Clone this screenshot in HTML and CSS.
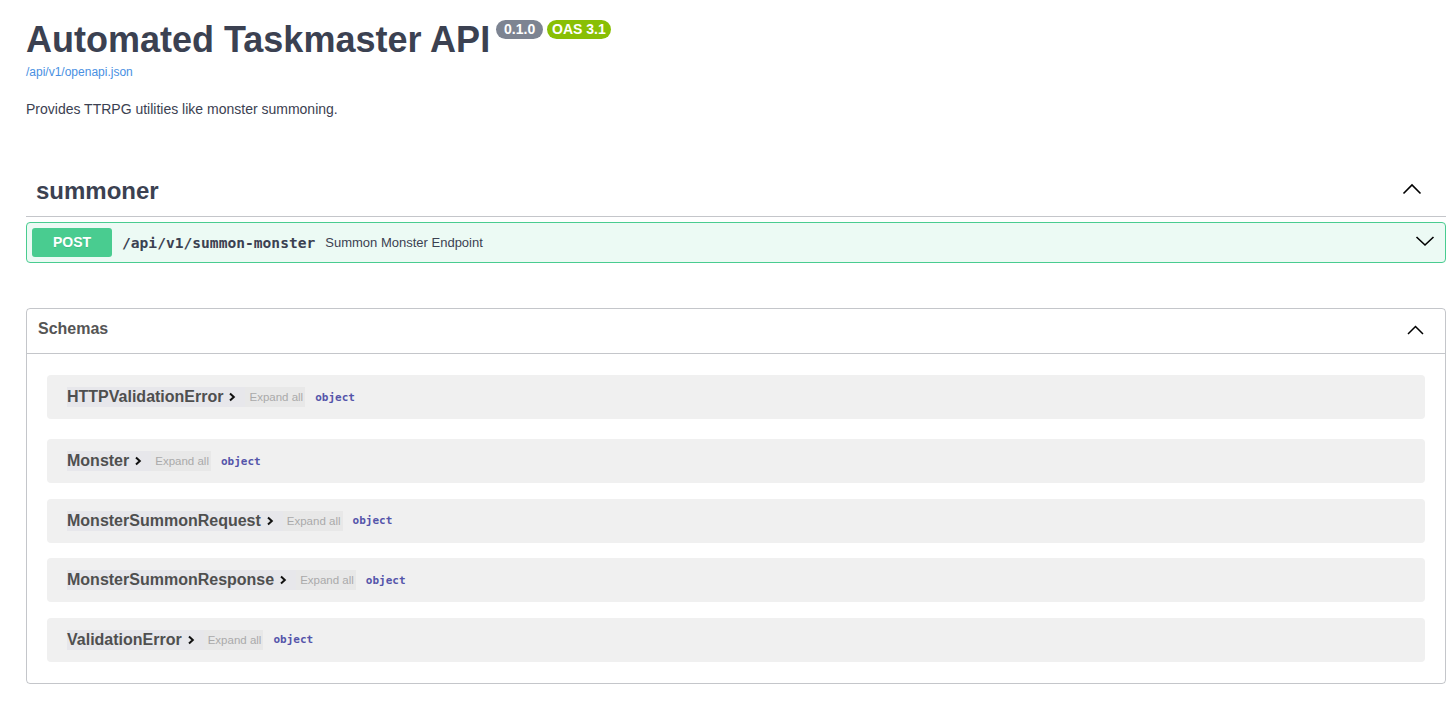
FILE: index.html
```html
<!DOCTYPE html>
<html lang="en">
<head>
<meta charset="utf-8">
<title>Automated Taskmaster API</title>
<link rel="stylesheet" href="styles.css">
</head>
<body>
<div class="wrapper">
  <section class="info">
    <div class="title-row">
      <h2 class="title">Automated Taskmaster API</h2>
      <span class="badge version"> 0.1.0 </span>
      <span class="badge oas">OAS 3.1</span>
    </div>
    <a class="spec-link" href="#">/api/v1/openapi.json</a>
    <p class="desc">Provides TTRPG utilities like monster summoning.</p>
  </section>

  <section class="tag">
    <h3 class="tag-header">
      <span class="tag-name">summoner</span>
      <svg class="arrow-up" width="20" height="12" viewBox="0 0 20 12"><polyline points="1.5,10.5 10,2 18.5,10.5" fill="none" stroke="#000" stroke-width="1.6"/></svg>
    </h3>
    <div class="opblock">
      <span class="method">POST</span>
      <span class="path">/api/v1/summon-monster</span>
      <span class="op-desc">Summon Monster Endpoint</span>
      <svg class="arrow-down" width="20" height="12" viewBox="0 0 20 12"><polyline points="1.5,2 10,10 18.5,2" fill="none" stroke="#000" stroke-width="1.6"/></svg>
    </div>
  </section>

  <section class="models">
    <h4 class="models-header">
      <span>Schemas</span>
      <svg class="arrow-up small" width="17" height="10" viewBox="0 0 17 10"><polyline points="1,9 8.5,1.5 16,9" fill="none" stroke="#000" stroke-width="1.5"/></svg>
    </h4>
    <div class="model-list">
      <div class="model">
        <span class="model-title">HTTPValidationError<svg class="chev" width="8" height="10" viewBox="0 0 8 10"><polyline points="2,1.5 5.8,5 2,8.5" fill="none" stroke="#111" stroke-width="2"/></svg></span>
        <span class="expand">Expand all</span>
        <span class="type">object</span>
      </div>
      <div class="model">
        <span class="model-title">Monster<svg class="chev" width="8" height="10" viewBox="0 0 8 10"><polyline points="2,1.5 5.8,5 2,8.5" fill="none" stroke="#111" stroke-width="2"/></svg></span>
        <span class="expand">Expand all</span>
        <span class="type">object</span>
      </div>
      <div class="model">
        <span class="model-title">MonsterSummonRequest<svg class="chev" width="8" height="10" viewBox="0 0 8 10"><polyline points="2,1.5 5.8,5 2,8.5" fill="none" stroke="#111" stroke-width="2"/></svg></span>
        <span class="expand">Expand all</span>
        <span class="type">object</span>
      </div>
      <div class="model">
        <span class="model-title">MonsterSummonResponse<svg class="chev" width="8" height="10" viewBox="0 0 8 10"><polyline points="2,1.5 5.8,5 2,8.5" fill="none" stroke="#111" stroke-width="2"/></svg></span>
        <span class="expand">Expand all</span>
        <span class="type">object</span>
      </div>
      <div class="model">
        <span class="model-title">ValidationError<svg class="chev" width="8" height="10" viewBox="0 0 8 10"><polyline points="2,1.5 5.8,5 2,8.5" fill="none" stroke="#111" stroke-width="2"/></svg></span>
        <span class="expand">Expand all</span>
        <span class="type">object</span>
      </div>
    </div>
  </section>
</div>
</body>
</html>
```
FILE: styles.css
```css
* { box-sizing: border-box; }

body {
  margin: 0;
  background: #fff;
  font-family: "Liberation Sans", Arial, sans-serif;
  color: #3b4151;
}

.wrapper {
  padding: 20px 10px 30px 26px;
}

/* info */
.title-row {
  display: flex;
  align-items: flex-start;
  height: 40px;
}
.title {
  margin: 0;
  font-size: 36px;
  line-height: 40px;
  font-weight: 700;
  color: #3b4151;
}
.badge {
  display: inline-block;
  margin-left: 5px;
  padding: 2px 4px;
  border-radius: 57px;
  font-size: 14px;
  line-height: 15px;
  font-weight: 700;
  color: #fff;
  white-space: pre;
}
.badge.version { background: #7d8492; margin-left: 6px; }
.badge.oas { background: #89bf04; margin-left: 4px; padding: 2px 5px; }

.spec-link {
  display: block;
  margin-top: 5px;
  font-size: 12px;
  line-height: 14px;
  color: #4990e2;
  text-decoration: none;
  width: max-content;
}
.desc {
  margin: 22px 0 0;
  font-size: 14px;
  line-height: 16px;
  color: #3b4151;
}

/* tag */
.tag { margin-top: 51px; }
.tag-header {
  display: flex;
  align-items: center;
  justify-content: space-between;
  margin: 0 0 5px;
  padding: 9px 24px 11px 10px;
  font-size: 24px;
  line-height: 28px;
  font-weight: 700;
  color: #3b4151;
  border-bottom: 1px solid rgba(59, 65, 81, .3);
}
.tag-header .arrow-up { margin-bottom: 4px; }

.opblock {
  display: flex;
  align-items: center;
  height: 41px;
  padding: 5px 10px 5px 5px;
  border: 1px solid #49cc90;
  border-radius: 4px;
  background: rgba(73, 204, 144, .1);
}
.method {
  width: 80px;
  height: 29px;
  line-height: 29px;
  text-align: center;
  border-radius: 3px;
  background: #49cc90;
  color: #fff;
  font-size: 14px;
  font-weight: 700;
  text-shadow: 0 1px 0 rgba(0, 0, 0, .1);
}
.path {
  padding: 0 10px;
  font-family: "DejaVu Sans Mono", "Liberation Mono", monospace;
  font-size: 14.6px;
  font-weight: 700;
  color: #3b4151;
}
.op-desc {
  font-size: 13px;
  color: #3b4151;
}
.arrow-down { margin-left: auto; margin-bottom: 4px; }

/* models */
.models {
  margin-top: 45px;
  border: 1px solid rgba(59, 65, 81, .3);
  border-radius: 4px;
}
.models-header {
  display: flex;
  align-items: flex-start;
  justify-content: space-between;
  height: 45px;
  margin: 0;
  padding: 11px 21px 0 11px;
  font-size: 16px;
  line-height: 18px;
  font-weight: 700;
  color: #555;
  border-bottom: 1px solid rgba(59, 65, 81, .3);
}
.models-header .arrow-up { margin-top: 5px; }

.model-list {
  display: flex;
  flex-direction: column;
  gap: 15.5px;
  padding: 21px 20px 21px;
}
.model-list .model:first-child { margin-bottom: 4.5px; }

.model {
  display: flex;
  align-items: center;
  height: 44px;
  padding: 0 20px;
  border-radius: 4px;
  background: #f0f0f0;
}
.model-title {
  display: flex;
  align-items: center;
  height: 20px;
  padding-right: 9px;
  background: #e7e7eb;
  font-size: 16px;
  font-weight: 700;
  color: #4f4f4f;
}
.chev { margin-left: 5px; }
.expand {
  display: flex;
  align-items: center;
  height: 20px;
  padding: 0 2px 0 4px;
  background: #e8e8e8;
  font-size: 11.5px;
  color: #aaa;
}
.type {
  margin-left: 10px;
  font-family: "DejaVu Sans Mono", "Liberation Mono", monospace;
  font-size: 11px;
  font-weight: 600;
  color: #55a;
}
```
